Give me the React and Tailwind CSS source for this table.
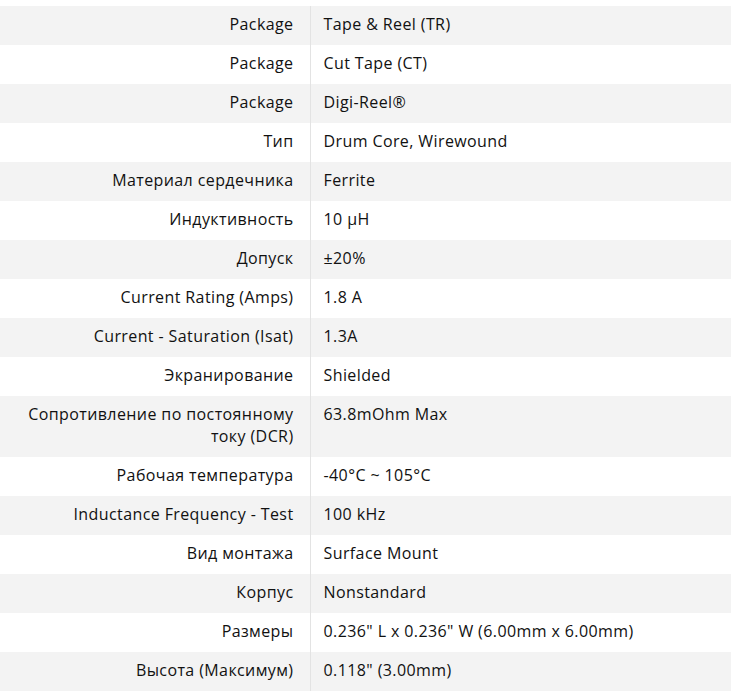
const rows = [
  ['Package', 'Tape & Reel (TR)'],
  ['Package', 'Cut Tape (CT)'],
  ['Package', 'Digi-Reel®'],
  ['Тип', 'Drum Core, Wirewound'],
  ['Материал сердечника', 'Ferrite'],
  ['Индуктивность', '10 µH'],
  ['Допуск', '±20%'],
  ['Current Rating (Amps)', '1.8 A'],
  ['Current - Saturation (Isat)', '1.3A'],
  ['Экранирование', 'Shielded'],
  ['Сопротивление по постоянному току (DCR)', '63.8mOhm Max'],
  ['Рабочая температура', '-40°C ~ 105°C'],
  ['Inductance Frequency - Test', '100 kHz'],
  ['Вид монтажа', 'Surface Mount'],
  ['Корпус', 'Nonstandard'],
  ['Размеры', '0.236" L x 0.236" W (6.00mm x 6.00mm)'],
  ['Высота (Максимум)', '0.118" (3.00mm)'],
];

export default function App() {
  return (
    <div className="w-[731px] h-[696px] bg-white pt-[6px] text-[16px] leading-[21.5px] tracking-[0.4px] text-[#111]" style={{ fontFamily: '"Open Sans", sans-serif' }}>
      <table className="w-full border-collapse">
        <tbody>
          {rows.map(([label, value], i) => (
            <tr key={i} className={i % 2 === 0 ? 'bg-[#f3f3f3]' : 'bg-white'}>
              <th className="w-[310px] pl-[20px] pr-[16px] pt-[8px] pb-[9.5px] text-right font-[450] align-top border-r border-[#e3e3e3]">
                {label}
              </th>
              <td className="pl-[13px] pr-4 pt-[8px] pb-[9.5px] text-left font-[450] align-top">{value}</td>
            </tr>
          ))}
        </tbody>
      </table>
    </div>
  );
}
